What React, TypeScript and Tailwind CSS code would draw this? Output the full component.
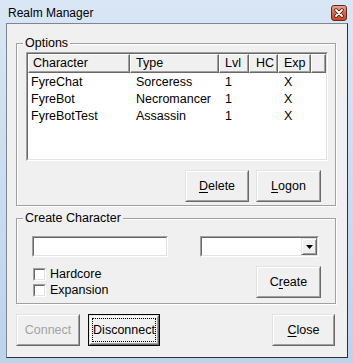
import React from "react";

type BtnProps = {
    children: React.ReactNode;
    className?: string;
    isDefault?: boolean;
    disabled?: boolean;
};

// classic 3D push button
const Button = ({ children, className = "", isDefault = false, disabled = false }: BtnProps) => {
    const face = (
        <div className="flex h-full w-full border border-t-[#e3e3e3] border-l-[#e3e3e3] border-r-[#696969] border-b-[#696969] bg-[#f0f0f0]">
            <div
                className={`flex h-full w-full items-center justify-center border border-t-white border-l-white border-r-[#a0a0a0] border-b-[#a0a0a0] ${
                    disabled ? "text-[#a3a3a3]" : "text-black"
                }`}
            >
                {isDefault ? (
                    <div className="m-[1px] flex flex-1 self-stretch items-center justify-center border border-dotted border-black">
                        {children}
                    </div>
                ) : (
                    children
                )}
            </div>
        </div>
    );
    if (isDefault) {
        return <div className={`h-[32px] border border-black ${className}`}>{face}</div>;
    }
    return <div className={`h-[32px] ${className}`}>{face}</div>;
};

// sunken edit / list border
const Sunken = ({ className = "", children }: { className?: string; children?: React.ReactNode }) => (
    <div className={`border border-t-[#a0a0a0] border-l-[#a0a0a0] border-r-white border-b-white ${className}`}>
        <div className="flex h-full w-full flex-col border border-t-[#696969] border-l-[#696969] border-r-[#e3e3e3] border-b-[#e3e3e3] bg-white">
            {children}
        </div>
    </div>
);

const columns = [
    { name: "Character", w: "w-[102px]", pad: "pl-[4px]" },
    { name: "Type", w: "w-[89px]", pad: "pl-[5px]" },
    { name: "Lvl", w: "w-[30px]", pad: "pl-[5px]" },
    { name: "HC", w: "w-[29px]", pad: "pl-[6px]" },
    { name: "Exp", w: "w-[33px]", pad: "pl-[5px]" },
    { name: "", w: "w-[15px]", pad: "pl-0" },
];

const cellW = ["w-[102px] pl-[3px]", "w-[89px] pl-[6px]", "w-[30px] pl-[6px]", "w-[29px] pl-[6px]", "w-[33px] pl-[6px]"];

const characters = [
    ["FyreChat", "Sorceress", "1", "", "X"],
    ["FyreBot", "Necromancer", "1", "", "X"],
    ["FyreBotTest", "Assassin", "1", "", "X"],
];

const Checkbox = ({ label }: { label: string }) => (
    <div className="flex h-[16px] items-center gap-[4px]">
        <Sunken className="h-[13px] w-[13px]" />
        <span>{label}</span>
    </div>
);

export default function App() {
    return (
        <div className="flex h-[363px] w-[353px] flex-col bg-linear-to-b from-[#d9e6f5] to-[#bcd3ec] pb-[5px] pl-[6px] pr-[5px] font-['Liberation_Sans',Arial,sans-serif] text-[12.5px] leading-[15px] text-black">
            {/* title bar */}
            <div className="flex h-[23px] shrink-0 items-start justify-between">
                <div className="ml-[2px] mt-[6px] text-[12px]">Realm Manager</div>
                <div className="mr-[1px] mt-[5px] flex h-[16px] w-[16px] items-center justify-center rounded-[3px] border border-[#6b2416] bg-linear-to-b from-[#e8a593] via-[#d2654a] to-[#c24a2c]">
                    <svg width="10" height="10" viewBox="0 0 10 10">
                        <path d="M2 2 L8 8 M8 2 L2 8" stroke="#4a150c" strokeWidth="3.4" strokeLinecap="round" />
                        <path d="M2 2 L8 8 M8 2 L2 8" stroke="#ffffff" strokeWidth="1.8" strokeLinecap="round" />
                    </svg>
                </div>
            </div>

            {/* client area */}
            <div className="flex flex-1 flex-col border border-t-[#7d8794] border-l-[#7d8794] border-r-[#2c3137] border-b-[#2c3137] bg-[#f0f0f0]">
                <fieldset className="ml-[9px] mt-[12px] w-[320px] border border-[#a0a0a0] shadow-[inset_1px_1px_0_#ffffff,1px_1px_0_#ffffff]">
                    <legend className="ml-[6px] bg-[#f0f0f0] px-[2px] leading-[15px]">Options</legend>
                    <div className="pb-[3px] pl-[9px] pt-[1px]">
                        <Sunken className="h-[109px] w-[302px]">
                            <div className="flex h-[19px] shrink-0">
                                {columns.map((c, i) => (
                                    <div
                                        key={i}
                                        className={`flex h-full shrink-0 items-center border border-t-white border-l-white border-r-[#696969] border-b-[#696969] bg-[#f0f0f0] shadow-[inset_-1px_-1px_0_#a0a0a0] ${c.w} ${c.pad}`}
                                    >
                                        {c.name}
                                    </div>
                                ))}
                            </div>
                            <div className="pt-[1px]">
                                {characters.map((row, r) => (
                                    <div key={r} className="flex h-[17px] items-center">
                                        {row.map((v, i) => (
                                            <div key={i} className={`shrink-0 whitespace-nowrap ${cellW[i]}`}>
                                                {v}
                                            </div>
                                        ))}
                                    </div>
                                ))}
                            </div>
                        </Sunken>
                        <div className="mt-[9px] flex justify-end gap-[7px] pr-[14px]">
                            <Button className="w-[64px]">
                                <span>
                                    <u className="underline-offset-2">D</u>elete
                                </span>
                            </Button>
                            <Button className="w-[65px]">
                                <span>
                                    <u className="underline-offset-2">L</u>ogon
                                </span>
                            </Button>
                        </div>
                    </div>
                </fieldset>

                <fieldset className="ml-[9px] mt-[5px] w-[320px] border border-[#a0a0a0] shadow-[inset_1px_1px_0_#ffffff,1px_1px_0_#ffffff]">
                    <legend className="ml-[6px] bg-[#f0f0f0] px-[2px] leading-[15px]">Create Character</legend>
                    <div className="pb-[5px] pl-[15px] pt-[10px]">
                        <div className="flex">
                            <Sunken className="h-[21px] w-[136px]" />
                            <Sunken className="ml-[32px] h-[21px] w-[119px]">
                                <div className="flex h-full justify-end">
                                    <div className="flex h-full w-[16px] items-center justify-center border border-t-[#e3e3e3] border-l-[#e3e3e3] border-r-[#696969] border-b-[#696969] bg-[#f0f0f0] shadow-[inset_1px_1px_0_#ffffff,inset_-1px_-1px_0_#a0a0a0]">
                                        <svg width="7" height="4" viewBox="0 0 7 4">
                                            <path d="M0 0 H7 L3.5 4 Z" fill="#000" />
                                        </svg>
                                    </div>
                                </div>
                            </Sunken>
                        </div>
                        <div className="mt-[9px] flex pr-[14px]">
                            <div className="ml-[1px] flex flex-col">
                                <Checkbox label="Hardcore" />
                                <Checkbox label="Expansion" />
                            </div>
                            <Button className="ml-auto w-[65px]">
                                <span>
                                    C<u className="underline-offset-2">r</u>eate
                                </span>
                            </Button>
                        </div>
                    </div>
                </fieldset>

                <div className="ml-[9px] mr-[12px] mt-[10px] flex">
                    <Button className="w-[64px]" disabled>
                        Connect
                    </Button>
                    <Button className="ml-[8px] w-[72px]" isDefault>
                        Disconnect
                    </Button>
                    <Button className="ml-auto w-[63px]">
                        <span>
                            <u className="underline-offset-2">C</u>lose
                        </span>
                    </Button>
                </div>
            </div>
        </div>
    );
}
